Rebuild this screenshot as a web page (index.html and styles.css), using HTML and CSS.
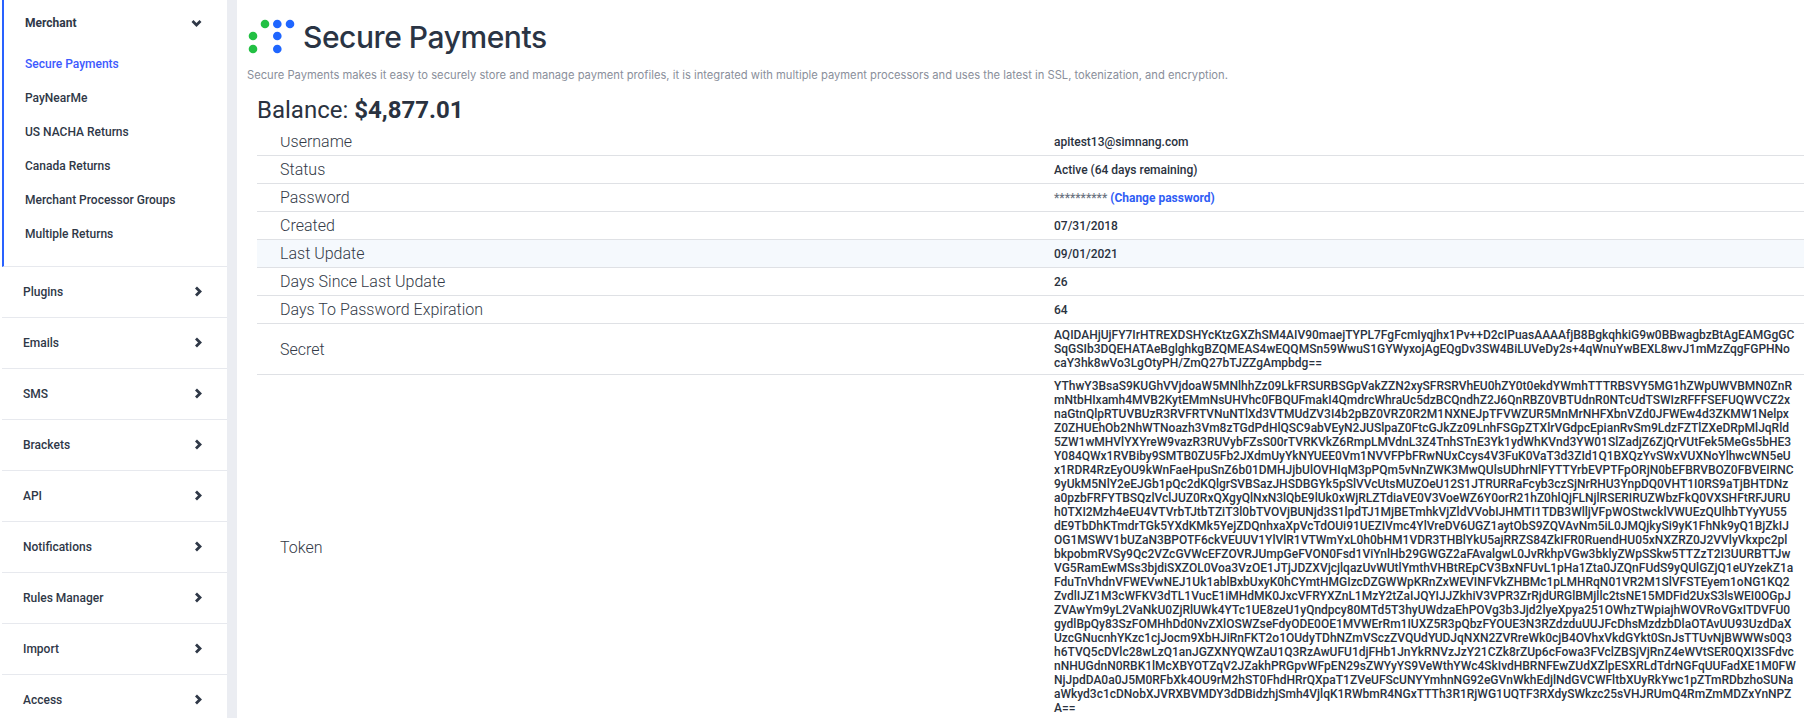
FILE: index.html
```html
<!DOCTYPE html>
<html lang="en">
<head>
<meta charset="utf-8">
<title>Secure Payments</title>
<link rel="stylesheet" href="styles.css">
</head>
<body>
<div class="app">
  <aside class="sidebar">
    <section class="group group-open">
      <div class="group-head">
        <span class="group-title">Merchant</span>
        <svg class="chev-down" viewBox="0 0 11 8"><path d="M1.5 2 5.5 6 9.5 2"/></svg>
      </div>
      <ul class="submenu">
        <li class="active">Secure Payments</li>
        <li>PayNearMe</li>
        <li>US NACHA Returns</li>
        <li>Canada Returns</li>
        <li>Merchant Processor Groups</li>
        <li>Multiple Returns</li>
      </ul>
    </section>
    <section class="group"><span>Plugins</span><svg class="chev" viewBox="0 0 8 11"><path d="M2 1.5 6 5.5 2 9.5"/></svg></section>
    <section class="group"><span>Emails</span><svg class="chev" viewBox="0 0 8 11"><path d="M2 1.5 6 5.5 2 9.5"/></svg></section>
    <section class="group"><span>SMS</span><svg class="chev" viewBox="0 0 8 11"><path d="M2 1.5 6 5.5 2 9.5"/></svg></section>
    <section class="group"><span>Brackets</span><svg class="chev" viewBox="0 0 8 11"><path d="M2 1.5 6 5.5 2 9.5"/></svg></section>
    <section class="group"><span>API</span><svg class="chev" viewBox="0 0 8 11"><path d="M2 1.5 6 5.5 2 9.5"/></svg></section>
    <section class="group"><span>Notifications</span><svg class="chev" viewBox="0 0 8 11"><path d="M2 1.5 6 5.5 2 9.5"/></svg></section>
    <section class="group"><span>Rules Manager</span><svg class="chev" viewBox="0 0 8 11"><path d="M2 1.5 6 5.5 2 9.5"/></svg></section>
    <section class="group"><span>Import</span><svg class="chev" viewBox="0 0 8 11"><path d="M2 1.5 6 5.5 2 9.5"/></svg></section>
    <section class="group"><span>Access</span><svg class="chev" viewBox="0 0 8 11"><path d="M2 1.5 6 5.5 2 9.5"/></svg></section>
  </aside>
  <main class="content">
    <header class="page-head">
      <svg class="logo" viewBox="0 0 48 35">
        <circle class="dot-g" cx="17" cy="5" r="4.3"/>
        <circle class="dot-b" cx="29.3" cy="5" r="4.3"/>
        <circle class="dot-b" cx="42" cy="5" r="4.3"/>
        <circle class="dot-g" cx="5" cy="17" r="4.3"/>
        <circle class="dot-b" cx="29.3" cy="17" r="4.3"/>
        <circle class="dot-g" cx="5" cy="30" r="4.3"/>
        <circle class="dot-b" cx="29.3" cy="30" r="4.3"/>
      </svg>
      <h1>Secure Payments</h1>
    </header>
    <p class="lead">Secure Payments makes it easy to securely store and manage payment profiles, it is integrated with multiple payment processors and uses the latest in SSL, tokenization, and encryption.</p>
    <h2 class="balance">Balance: <b>$4,877.01</b></h2>
    <table class="info">
      <tr><th>Username</th><td>apitest13@simnang.com</td></tr>
      <tr><th>Status</th><td>Active (64 days remaining)</td></tr>
      <tr><th>Password</th><td><span class="mask">**********</span> <a href="#">(Change password)</a></td></tr>
      <tr><th>Created</th><td>07/31/2018</td></tr>
      <tr class="hover"><th>Last Update</th><td>09/01/2021</td></tr>
      <tr><th>Days Since Last Update</th><td>26</td></tr>
      <tr><th>Days To Password Expiration</th><td>64</td></tr>
      <tr><th>Secret</th><td>AQIDAHjUjFY7IrHTREXDSHYcKtzGXZhSM4AIV90maejTYPL7FgFcmIyqjhx1Pv++D2cIPuasAAAAfjB8BgkqhkiG9w0BBwagbzBtAgEAMGgGC<br>SqGSIb3DQEHATAeBglghkgBZQMEAS4wEQQMSn59WwuS1GYWyxojAgEQgDv3SW4BiLUVeDy2s+4qWnuYwBEXL8wvJ1mMzZqgFGPHNo<br>caY3hk8wVo3LgOtyPH/ZmQ27bTJZZgAmpbdg==</td></tr>
      <tr><th>Token</th><td>YThwY3BsaS9KUGhVVjdoaW5MNlhhZz09LkFRSURBSGpVakZZN2xySFRSRVhEU0hZY0t0ekdYWmhTTTRBSVY5MG1hZWpUWVBMN0ZnR<br>mNtbHIxamh4MVB2KytEMmNsUHVhc0FBQUFmakI4QmdrcWhraUc5dzBCQndhZ2J6QnRBZ0VBTUdnR0NTcUdTSWIzRFFFSEFUQWVCZ2x<br>naGtnQlpRTUVBUzR3RVFRTVNuNTlXd3VTMUdZV3I4b2pBZ0VRZ0R2M1NXNEJpTFVWZUR5MnMrNHFXbnVZd0JFWEw4d3ZKMW1Nelpx<br>Z0ZHUEhOb2NhWTNoazh3Vm8zTGdPdHlQSC9abVEyN2JUSlpaZ0FtcGJkZz09LnhFSGpZTXlrVGdpcEpianRvSm9LdzFZTlZXeDRpMlJqRld<br>5ZW1wMHVlYXYreW9vazR3RUVybFZsS00rTVRKVkZ6RmpLMVdnL3Z4TnhSTnE3Yk1ydWhKVnd3YW01SlZadjZ6ZjQrVUtFek5MeGs5bHE3<br>Y084QWx1RVBiby9SMTB0ZU5Fb2JXdmUyYkNYUEE0Vm1NVVFPbFRwNUxCcys4V3FuK0VaT3d3ZId1Q1BXQzYvSWxVUXNoYlhwcWN5eU<br>x1RDR4RzEyOU9kWnFaeHpuSnZ6b01DMHJjbUlOVHIqM3pPQm5vNnZWK3MwQUlsUDhrNlFYTTYrbEVPTFpORjN0bEFBRVBOZ0FBVEIRNC<br>9yUkM5NlY2eEJGb1pQc2dKQlgrSVBSazJHSDBGYk5pSlVVcUtsMUZOeU12S1JTRURRaFcyb3czSjNrRHU3YnpDQ0VHT1I0RS9aTjBHTDNz<br>a0pzbFRFYTBSQzlVclJUZ0RxQXgyQlNxN3lQbE9lUk0xWjRLZTdiaVE0V3VoeWZ6Y0orR21hZ0hlQjFLNjlRSERIRUZWbzFkQ0VXSHFtRFJURU<br>h0TXI2Mzh4eEU4VTVrbTJtbTZiT3l0bTVOVjBUNjd3S1lpdTJ1MjBETmhkVjZldVVobIJHMTI1TDB3WlljVFpWOStwcklVWUEzQUlhbTYyYU55<br>dE9TbDhKTmdrTGk5YXdKMk5YejZDQnhxaXpVcTdOUi91UEZIVmc4YlVreDV6UGZ1aytObS9ZQVAvNm5iL0JMQjkySi9yK1FhNk9yQ1BjZkIJ<br>OG1MSWV1bUZaN3BPOTF6ckVEUUV1YlVlR1VTWmYxL0h0bHM1VDR3THBlYkU5ajRRZS84ZkIFR0RuendHU05xNXZRZ0J2VVlyVkxpc2pl<br>bkpobmRVSy9Qc2VZcGVWcEFZOVRJUmpGeFVON0Fsd1ViYnlHb29GWGZ2aFAvalgwL0JvRkhpVGw3bklyZWpSSkw5TTZzT2I3UURBTTJw<br>VG5RamEwMSs3bjdiSXZOL0Voa3VzOE1JTjJDZXVjcjlqazUvWUtlYmthVHBtREpCV3BxNFUvL1pHa1Zta0JZQnFUdS9yQUlGZjQ1eUYzekZ1a<br>FduTnVhdnVFWEVwNEJ1Uk1ablBxbUxyK0hCYmtHMGIzcDZGWWpKRnZxWEVINFVkZHBMc1pLMHRqN01VR2M1SlVFSTEyem1oNG1KQ2<br>ZvdlIJZ1M3cWFKV3dTL1VucE1iMHdMK0JxcVFRYXZnL1MzY2tZaIJQYIJJZkhiV3VPR3ZrRjdURGlBMjllc2tsNE15MDFid2UxS3lsWEI0OGpJ<br>ZVAwYm9yL2VaNkU0ZjRlUWk4YTc1UE8zeU1yQndpcy80MTd5T3hyUWdzaEhPOVg3b3Jjd2lyeXpya251OWhzTWpiajhWOVRoVGxITDVFU0<br>gydlBpQy83SzFOMHhDd0NvZXlOSWZseFdyODE0OE1MVWErRm1IUXZ5R3pQbzFYOUE3N3RZdzduUUJFcDhsMzdzbDlaOTAvUU93UzdDaX<br>UzcGNucnhYKzc1cjJocm9XbHJiRnFKT2o1OUdyTDhNZmVSczZVQUdYUDJqNXN2ZVRreWk0cjB4OVhxVkdGYkt0SnJsTTUvNjBWWWs0Q3<br>h6TVQ5cDVlc28wLzQ1anJGZXNYQWZaU1Q3RzAwUFU1djFHb1JnYkRNVzJzY21CZk8rZUp6cFowa3FVclZBSjVjRnZ4eWVtSER0QXI3SFdvc<br>nNHUGdnN0RBK1lMcXBYOTZqV2JZakhPRGpvWFpEN29sZWYyYS9VeWthYWc4SkIvdHBRNFEwZUdXZlpESXRLdTdrNGFqUUFadXE1M0FW<br>NjJpdDA0a0J5M0RFbXk4OU9rM2hST0FhdHRrQXpaT1ZVeUFScUNYYmhnNG92eGVnWkhEdjlNdGVCWFltbXUyRkYwc1pZTmRDbzhoSUNa<br>aWkyd3c1cDNobXJVRXBVMDY3dDBidzhjSmh4VjlqK1RWbmR4NGxTTTh3R1RjWG1UQTF3RXdySWkzc25sVHJRUmQ4RmZmMDZxYnNPZ<br>A==</td></tr>
    </table>
  </main>
</div>
</body>
</html>
```

FILE: styles.css
```css
* { box-sizing: border-box; }
html, body { margin: 0; padding: 0; height: 718px; overflow: hidden; background: #fff; }
body { font-family: Roboto, "Liberation Sans", sans-serif; color: #2a3240; }

.app { display: flex; width: 1818px; height: 718px; overflow: hidden; }

.sidebar {
  width: 237px;
  flex: none;
  padding-left: 2px;
  border-right: 10px solid #ebedf2;
  font-size: 12px;
  font-weight: 500;
  color: #2f3847;
}
.group {
  display: flex;
  align-items: center;
  justify-content: space-between;
  height: 51px;
  padding: 0 25px 0 21px;
  border-bottom: 1px solid #e7e9ee;
}
.group-open {
  display: block;
  height: 267px;
  padding: 0;
  border-left: 2px solid #2962ff;
}
.group-head {
  display: flex;
  align-items: center;
  justify-content: space-between;
  height: 47px;
  padding: 2px 25px 3px 21px;
}
.group-title { font-weight: 700; }
.submenu { list-style: none; margin: 0; padding: 0 0 0 21px; }
.submenu li { height: 34px; line-height: 34px; }
.submenu .active { color: #3d5afe; }
.chev, .chev-down { flex: none; fill: none; stroke: #2f3847; stroke-width: 2.8; }
.chev { width: 8px; height: 11px; margin-top: -1px; }
.chev-down { width: 11px; height: 8px; margin-top: -1px; }

.content { flex: 1; min-width: 0; padding: 19px 14px 0 10px; }
.page-head { display: flex; align-items: center; height: 35px; padding-left: 1px; }
.logo { width: 48px; height: 35px; flex: none; }
.dot-g { fill: #22c043; }
.dot-b { fill: #1f66ff; }
.page-head h1 {
  margin: 2px 0 0 7px;
  font-family: Inter, sans-serif;
  font-size: 30px;
  font-weight: 500;
  letter-spacing: -0.45px;
  line-height: 35px;
  color: #2a3444;
}
.lead {
  margin: 14px 0 0;
  font-family: Inter, sans-serif;
  font-size: 11.2px;
  line-height: 14px;
  color: #8a8f9b;
}
.balance {
  position: relative;
  margin: 15px 0 0 10px;
  height: 40px;
  background: #fff;
  font-size: 24px;
  font-weight: 400;
  line-height: 27px;
  color: #2a3240;
}
.balance b { font-weight: 700; }

.info {
  width: 1547px;
  margin: -9px 0 0 10px;
  border-collapse: collapse;
  table-layout: fixed;
}
.info tr { border-bottom: 1px solid #dfe1e5; }
.info th {
  width: 797px;
  padding: 4px 4px 4px 23px;
  font-size: 16px;
  font-weight: 300;
  line-height: 19px;
  text-align: left;
  color: #333a47;
}
.info td {
  padding: 4px 0;
  font-size: 12px;
  font-weight: 500;
  color: #2a3240;
  white-space: nowrap;
}
.info .mask { color: #6b7280; }
.info a { color: #2f5df5; text-decoration: none; font-weight: 700; }
.info .hover { background: #f5f9fd; }
```
